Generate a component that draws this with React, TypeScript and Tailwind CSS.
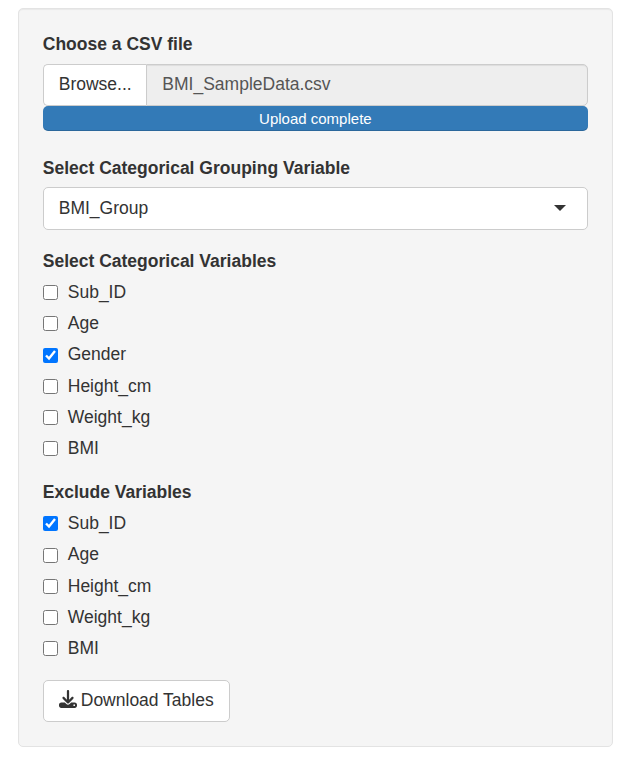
import { useState } from "react";
import { FaDownload } from "react-icons/fa6";

function CheckItem({ label, initial }: { label: string; initial: boolean }) {
  const [checked, setChecked] = useState(initial);
  return (
    <label className="flex h-[25px] items-center">
      <input
        type="checkbox"
        checked={checked}
        onChange={() => setChecked(!checked)}
        className="mt-[0.5px] mr-[10px] h-[15px] w-[15px] shrink-0"
      />
      <span>{label}</span>
    </label>
  );
}

function CheckGroup({ title, items, selected }: { title: string; items: string[]; selected: string }) {
  return (
    <fieldset className="mb-[18.75px]">
      <div className="mb-[6.25px] font-bold">{title}</div>
      <div className="flex flex-col gap-[6.25px]">
        {items.map((item) => (
          <CheckItem key={item} label={item} initial={item === selected} />
        ))}
      </div>
    </fieldset>
  );
}

export default function App() {
  return (
    <div className="h-[759px] w-[625px] bg-white pt-[8px] pl-[18px] font-['Liberation_Sans',Arial,sans-serif] text-[17.5px] leading-[25px] text-[#333]">
      <div className="h-[739px] w-[595px] rounded-[5px] border border-[#e3e3e3] bg-[#f5f5f5] pt-[23.4px] pr-[24px] pl-[23.75px] shadow-[inset_0_1px_1px_rgba(0,0,0,0.05)]">
        <div className="mb-[6.6px] font-bold">Choose a CSV file</div>
        <div className="flex h-[42px] rounded-[5px]">
          <button className="w-[103px] shrink-0 rounded-l-[5px] border border-r-0 border-[#ccc] bg-white pb-[1px] pl-[15px] text-left">
            Browse...
          </button>
          <div className="flex-1 rounded-r-[5px] border border-[#ccc] bg-[#eee] pt-[7px] pl-[15.6px] text-[#555] shadow-[inset_0_1px_1px_rgba(0,0,0,0.075)]">
            BMI_SampleData.csv
          </div>
        </div>
        <div className="mb-[25.15px] h-[25px] rounded-[5px] bg-[#337ab7] text-center text-[15px] text-white shadow-[inset_0_-1px_0_rgba(0,0,0,0.15)]">
          Upload complete
        </div>
        <div className="mb-[6.25px] font-bold">Select Categorical Grouping Variable</div>
        <div className="mb-[18.75px] flex h-[42.5px] items-center justify-between rounded-[5px] border border-[#ccc] bg-white pr-[21px] pb-[0.5px] pl-[15px]">
          <span>BMI_Group</span>
          <span className="h-0 w-0 border-x-[6px] border-t-[6px] border-x-transparent border-t-[#333]" />
        </div>
        <CheckGroup
          title="Select Categorical Variables"
          items={["Sub_ID", "Age", "Gender", "Height_cm", "Weight_kg", "BMI"]}
          selected="Gender"
        />
        <CheckGroup
          title="Exclude Variables"
          items={["Sub_ID", "Age", "Height_cm", "Weight_kg", "BMI"]}
          selected="Sub_ID"
        />
        <button className="flex h-[42px] w-[187px] items-center rounded-[5px] border border-[#ccc] bg-white pb-[1px] pl-[15px] whitespace-nowrap">
          <FaDownload className="mr-[4px] mb-[2px] h-[18px] w-[18px] shrink-0" />
          <span>Download Tables</span>
        </button>
      </div>
    </div>
  );
}
